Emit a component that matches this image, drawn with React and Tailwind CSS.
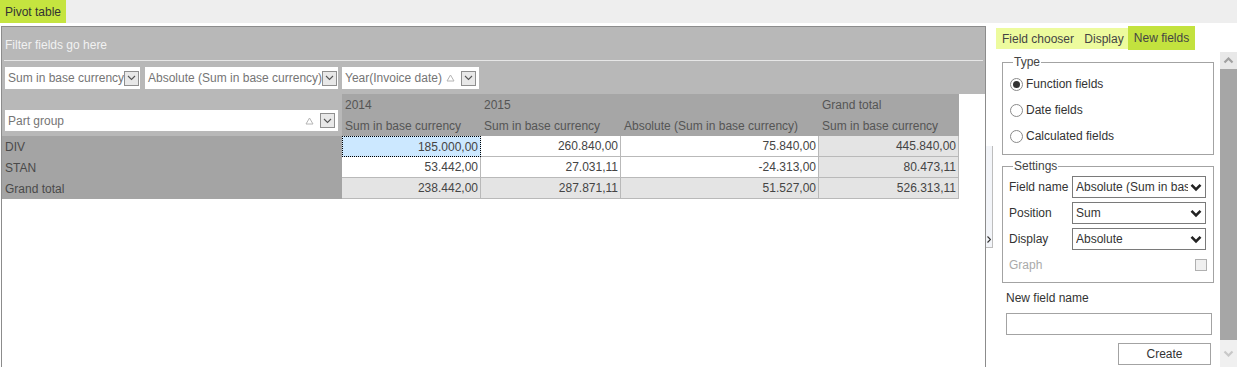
import React from 'react'

function Chevron() {
  return (
    <svg width="9" height="6" viewBox="0 0 9 6">
      <path d="M1 1l3.5 3.5L8 1" fill="none" stroke="#555" strokeWidth="1.1" />
    </svg>
  )
}

function DropBtn() {
  return (
    <span className="w-[15px] h-[15px] border border-[#8f8f8f] bg-[#e8e8e8] flex items-center justify-center shrink-0">
      <Chevron />
    </span>
  )
}

function SortTri() {
  return (
    <svg width="9" height="8" viewBox="0 0 9 8" className="shrink-0">
      <path d="M4.5 1L8 7H1z" fill="none" stroke="#b4b4b4" strokeWidth="1" />
    </svg>
  )
}

function FieldBox({ label, width, sort, height = 'h-[22px]' }) {
  return (
    <div className={`${width} ${height} bg-white flex items-center pl-[3px] pr-[3px] text-[#757575]`}>
      <span className="flex-1 whitespace-nowrap">{label}</span>
      {sort && <span className="mr-[6px] flex"><SortTri /></span>}
      <DropBtn />
    </div>
  )
}

function Radio({ checked, label }) {
  return (
    <div className="flex items-center h-[26px]">
      <span className="ml-[7px] w-[13px] h-[13px] rounded-full border border-[#8a8a8a] bg-white flex items-center justify-center">
        {checked && <span className="w-[7px] h-[7px] rounded-full bg-[#333]" />}
      </span>
      <span className="ml-[3px] text-[#333]">{label}</span>
    </div>
  )
}

function Select({ value }) {
  return (
    <div className="w-[134px] h-[22px] border border-[#7a7a7a] bg-white flex items-center pl-[3px] pr-[3px] text-[#333]">
      <span className="flex-1 min-w-0 overflow-hidden whitespace-nowrap">{value}</span>
      <svg width="12" height="9" viewBox="0 0 12 9" className="shrink-0 ml-[2px]">
        <path d="M1.5 1.8l4.5 4.5 4.5-4.5" fill="none" stroke="#222" strokeWidth="2.6" />
      </svg>
    </div>
  )
}

const cols = [
  { w: 'w-[139px]', year: '2014', sub: 'Sum in base currency' },
  { w: 'w-[140px]', year: '2015', sub: 'Sum in base currency' },
  { w: 'w-[198px]', year: '', sub: 'Absolute (Sum in base currency)' },
  { w: 'w-[140px]', year: 'Grand total', sub: 'Sum in base currency' },
]

const rows = [
  { name: 'DIV', vals: ['185.000,00', '260.840,00', '75.840,00', '445.840,00'] },
  { name: 'STAN', vals: ['53.442,00', '27.031,11', '-24.313,00', '80.473,11'] },
  { name: 'Grand total', vals: ['238.442,00', '287.871,11', '51.527,00', '526.313,11'], total: true },
]

function Cell({ value, col, row, ri }) {
  const focus = ri === 0 && col === 0
  const gray = row.total || col === 3
  let cls = 'border-r border-b border-[#b9b9b9]'
  if (focus) cls = 'border border-dotted border-black bg-[#cce8ff]'
  else if (gray) cls += ' bg-[#e4e4e4]'
  else cls += ' bg-white'
  return (
    <div className={`${cols[col].w} h-[21px] flex items-center justify-end pr-[2px] text-[#444] ${cls}`}>
      {value}
    </div>
  )
}

function PivotGrid() {
  return (
    <div className="w-[983px] h-full flex flex-col">
      <div className="h-[33px] bg-[#b8b8b8] flex items-center pl-[3px] pt-[2px] text-[#f2f2f2]">
        Filter fields go here
      </div>
      <div className="bg-[#b8b8b8] px-[2px]">
        <div className="h-px bg-[#e6e6e6]" />
      </div>
      <div className="h-[33px] bg-[#b8b8b8] flex items-start pt-[6px] pl-[3px] gap-[5px]">
        <FieldBox label="Sum in base currency" width="w-[135px]" />
        <FieldBox label="Absolute (Sum in base currency)" width="w-[193px]" />
        <div className="ml-[-1px]">
          <FieldBox label="Year(Invoice date)" width="w-[137px]" sort />
        </div>
      </div>
      <div className="flex">
        <div className="w-[340px] flex flex-col">
          <div className="h-[42px] bg-[#b8b8b8] pt-[16px] pl-[3px]">
            <FieldBox label="Part group" width="w-[333px]" height="h-[21px]" sort />
          </div>
          {rows.map((r) => (
            <div key={r.name} className="h-[21px] bg-[#a4a4a4] flex items-center pl-[3px] text-[#4a4a4a]">
              {r.name}
            </div>
          ))}
        </div>
        <div className="flex flex-col">
          <div className="flex h-[42px] bg-[#a6a6a6] text-[#555]">
            {cols.map((c, i) => (
              <div key={i} className={`${c.w} flex flex-col pl-[3px]`}>
                <div className="h-[21px] flex items-center">{c.year}</div>
                <div className="h-[21px] flex items-center whitespace-nowrap">{c.sub}</div>
              </div>
            ))}
          </div>
          {rows.map((r, ri) => (
            <div key={r.name} className="flex">
              {r.vals.map((v, ci) => (
                <Cell key={ci} value={v} col={ci} row={r} ri={ri} />
              ))}
            </div>
          ))}
        </div>
      </div>
    </div>
  )
}

function RightPanel() {
  return (
    <div className="w-[244px] flex flex-col">
      <div className="h-[24px] flex items-start pl-[3px] text-[#444]">
        <div className="mt-[2px] h-[21px] w-[84px] bg-[#edfb9e] flex items-center justify-center">Field chooser</div>
        <div className="mt-[2px] h-[21px] w-[48px] bg-[#edfb9e] flex items-center justify-center">Display</div>
        <div className="h-[24px] w-[67px] bg-[#c3e23e] flex items-center justify-center">New fields</div>
      </div>
      <div className="flex flex-1 min-h-0">
        <div className="w-[227px] flex flex-col">
          <fieldset className="mt-[5px] ml-[9px] w-[212px] border border-[#a3a3a3] pb-[5px]">
            <legend className="ml-[10px] px-[1px] leading-[14px] text-[#444]">Type</legend>
            <div className="pt-[2px]">
              <Radio checked label="Function fields" />
              <Radio label="Date fields" />
              <Radio label="Calculated fields" />
            </div>
          </fieldset>
          <fieldset className="mt-[4px] ml-[9px] w-[212px] border border-[#a3a3a3] pb-[6px]">
            <legend className="ml-[10px] px-[1px] leading-[14px] text-[#444]">Settings</legend>
            <div className="mt-[3px] flex flex-col gap-[4px]">
              {[
                ['Field name', 'Absolute (Sum in base currency)'],
                ['Position', 'Sum'],
                ['Display', 'Absolute'],
              ].map(([l, v]) => (
                <div key={l} className="flex items-center pl-[6px]">
                  <span className="w-[63px] text-[#333]">{l}</span>
                  <Select value={v} />
                </div>
              ))}
              <div className="h-[22px] flex items-center pl-[6px] pr-[6px]">
                <span className="flex-1 text-[#aaa]">Graph</span>
                <span className="w-[12px] h-[12px] border border-[#b0b0b0] bg-[#f0f0f0]" />
              </div>
            </div>
          </fieldset>
          <div className="mt-[7px] ml-[13px] h-[16px] flex items-center text-[#333]">New field name</div>
          <div className="mt-[7px] ml-[13px] w-[206px] h-[22px] border border-[#a3a3a3] bg-white" />
          <div className="mt-[8px] ml-[125px] w-[93px] h-[22px] border border-[#a3a3a3] bg-white flex items-center justify-center text-[#333]">
            Create
          </div>
        </div>
        <div className="w-[17px] mt-[2px] flex flex-col">
          <div className="h-[17px] bg-[#e8e8e8] flex items-center justify-center">
            <svg width="11" height="7" viewBox="0 0 11 7">
              <path d="M1.5 5.5l4-4 4 4" fill="none" stroke="#a0a0a0" strokeWidth="2.2" />
            </svg>
          </div>
          <div className="flex-1 bg-[#a6a6a6]" />
          <div className="h-[27px] bg-[#f0f0f0] flex items-center justify-center">
            <svg width="11" height="7" viewBox="0 0 11 7">
              <path d="M1.5 1.5l4 4 4-4" fill="none" stroke="#c8c8c8" strokeWidth="2.2" />
            </svg>
          </div>
        </div>
      </div>
    </div>
  )
}

export default function App() {
  return (
    <div className="w-[1237px] h-[367px] overflow-hidden bg-white font-['Liberation_Sans',Arial,sans-serif] text-[12px] leading-none">
      <div className="h-[23px] bg-[#eeeeee] flex">
        <div className="h-[23px] px-[5px] bg-[#c5e43f] flex items-center text-[#333]">Pivot table</div>
      </div>
      <div className="flex mt-[3px] h-[341px]">
        <div className="ml-[1px] w-[985px] h-full border-l border-t border-r border-[#8c8c8c]">
          <PivotGrid />
        </div>
        <div className="w-[7px] flex flex-col">
          <div className="mt-[120px] h-[102px] border-r border-b border-[#bdbdbd] bg-[#f3f5f9] flex items-end justify-center pb-[4px]">
            <svg width="4" height="7" viewBox="0 0 4 7">
              <path d="M0.5 0.5l3 3-3 3" fill="none" stroke="#333" strokeWidth="1.2" />
            </svg>
          </div>
        </div>
        <RightPanel />
      </div>
    </div>
  )
}
